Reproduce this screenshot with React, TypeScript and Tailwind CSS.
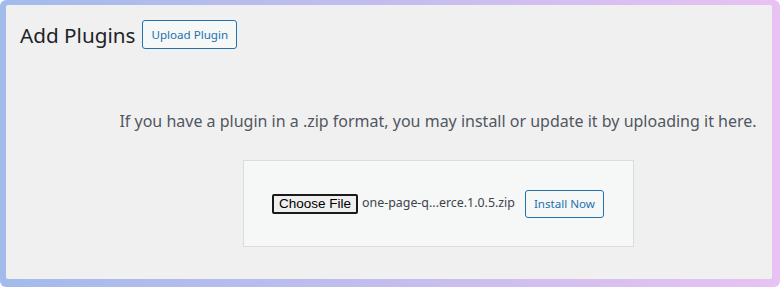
export default function App() {
  return (
    <div className="w-[780px] h-[287px] rounded-[6px] bg-gradient-to-r from-[#a2bbeb] via-[#c3bdee] to-[#e8c2f3] pt-[5px] pl-[6px] pr-[8px] pb-[8px]">
      <div
        className="h-full w-full rounded-[2px] bg-[#f0f0f1] text-[#1d2327]"
        style={{ fontFamily: '"Noto Sans", "Open Sans", sans-serif' }}
      >
        {/* page header */}
        <div className="flex items-center gap-[7px] pl-[14px] pt-[15px]">
          <h1 className="text-[20.7px] font-normal leading-[28px] text-[#1d2327]">Add Plugins</h1>
          <button className="h-[29px] rounded-[3px] border border-[#2271b1] bg-[#f6f7f7] px-[8px] text-[11.6px] text-[#2271b1]">
            Upload Plugin
          </button>
        </div>

        {/* upload area */}
        <div className="ml-[114px] mt-[60px] flex w-[636px] flex-col items-center">
          <p className="whitespace-nowrap text-[16px] leading-[24px] text-[#50575e]">
            If you have a plugin in a .zip format, you may install or update it by uploading it here.
          </p>
          <div className="mt-[27px] flex h-[87px] w-[391px] items-center justify-center gap-[10px] border border-[#dcdcde] bg-[#f6f7f7]">
            <div className="flex items-center gap-[4px]">
              <button
                className="h-[20px] rounded-[2px] border-2 border-[#1a1a1a] bg-[#efefef] px-[5px] text-[13.5px] leading-[14px] text-black"
                style={{ fontFamily: '"Liberation Sans", Arial, sans-serif' }}
              >
                Choose File
              </button>
              <span className="text-[12.4px] text-[#3c434a]">one-page-q...erce.1.0.5.zip</span>
            </div>
            <button className="h-[28px] rounded-[3px] border border-[#2271b1] bg-[#f6f7f7] px-[8px] text-[11.6px] text-[#2271b1]">
              Install Now
            </button>
          </div>
        </div>
      </div>
    </div>
  );
}
